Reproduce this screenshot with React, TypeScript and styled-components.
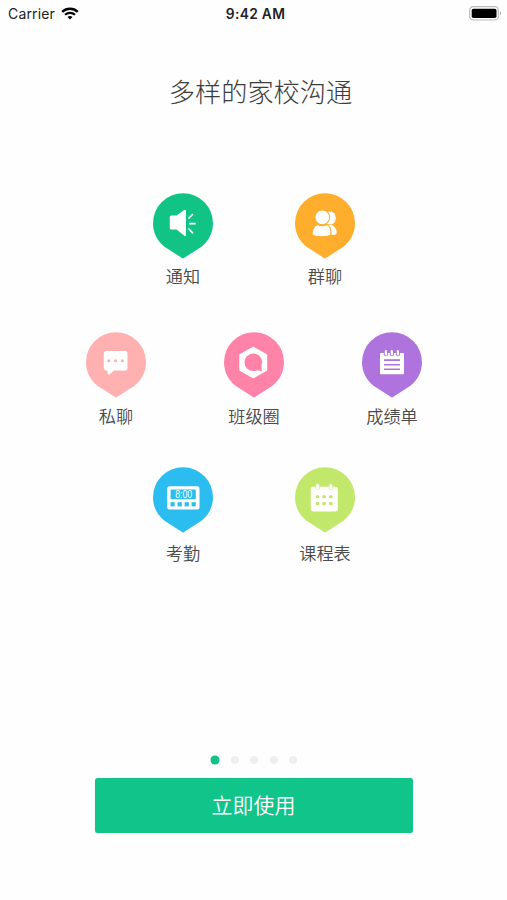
import React from "react";
import styled, { createGlobalStyle } from "styled-components";

const GlobalStyle = createGlobalStyle`
  * { box-sizing: border-box; }
  body {
    margin: 0;
    background: #fff;
    font-family: "Noto Sans CJK SC", sans-serif;
  }
`;

const Screen = styled.main`
  display: flex;
  flex-direction: column;
  width: 507px;
  height: 900px;
  overflow: hidden;
  background: #fefefe;
`;

const StatusBar = styled.header`
  display: grid;
  grid-template-columns: 1fr auto 1fr;
  align-items: center;
  height: 27px;
  padding: 0 5px 0 8px;
  font-family: Inter, sans-serif;
  font-size: 14px;
  color: #222;
`;

const Carrier = styled.div`
  display: flex;
  align-items: center;
  gap: 6px;
  letter-spacing: 0.15px;
`;

const Clock = styled.div`
  padding-left: 1px;
  font-size: 13.8px;
  font-weight: 600;
  letter-spacing: 0.3px;
`;

const BatterySlot = styled.div`
  display: flex;
  justify-content: flex-end;
`;

const Title = styled.h1`
  margin: 45px 0 0;
  padding-left: 14px;
  height: 38px;
  line-height: 38px;
  font-size: 26.2px;
  font-weight: 300;
  text-align: center;
  color: #3c3c3c;
`;

const Features = styled.section`
  display: flex;
  flex-direction: column;
  margin-top: 83px;
`;

const FeatureRow = styled.div<{ $gap: number; $height: number }>`
  display: flex;
  justify-content: center;
  gap: ${(p) => p.$gap}px;
  height: ${(p) => p.$height}px;
  padding-left: 1px;
`;

const FeatureItem = styled.div`
  display: flex;
  flex-direction: column;
  align-items: center;
  width: 60px;
`;

const Pin = styled.svg`
  display: block;
  width: 60px;
  height: 66px;
`;

const Label = styled.span<{ $gap: number }>`
  margin-top: ${(p) => p.$gap}px;
  line-height: 24px;
  font-size: 17.2px;
  font-weight: 350;
  white-space: nowrap;
  color: #4a4a4a;
`;

const Pager = styled.nav`
  display: flex;
  justify-content: center;
  gap: 11.5px;
  height: 8px;
  margin-top: 151px;
  padding-left: 1px;
`;

const Dot = styled.span<{ $active?: boolean }>`
  width: 8px;
  height: 8px;
  border-radius: 50%;
  background: ${(p) => (p.$active ? "#10c487" : "#eeeeee")};
  box-shadow: ${(p) => (p.$active ? "0 0 0 0.5px #10c487" : "none")};
`;

const StartButton = styled.button`
  align-self: center;
  width: 318px;
  height: 55px;
  margin: 14px 0 0 1px;
  padding: 0 1px 2px 0;
  border: 0;
  border-radius: 2.5px;
  background: #11c58a;
  color: #fff;
  font-family: inherit;
  font-size: 21px;
  font-weight: 350;
  line-height: 53px;
`;

const NoticeIcon = (
  <>
    <path
      d="M18.3 22.6H23.5L31.4 17.1Q33 16.4 33 18V42Q33 43.6 31.4 42.8L23.5 36.5H18.3Q16.8 36.5 16.8 35V24.1Q16.8 22.6 18.3 22.6Z"
      fill="#fff"
    />
    <path d="M36 25L39.5 21.5M36.8 30.7H42M36 36L39.5 39.8" stroke="#fff" strokeWidth="1.7" strokeLinecap="round" />
  </>
);

const GroupIcon = (
  <>
    <ellipse cx="35" cy="25" rx="5.8" ry="6.6" fill="#fff" />
    <path d="M31 32H36C39.8 32.5 41.8 37 41.8 40Q41.8 41.7 39.5 41.7H31Z" fill="#fff" />
    <g fill="#fff" stroke="#ffad2c" strokeWidth="1.1">
      <path d="M22.5 31.4Q27.3 34 32 31.4C34.5 33 36 37 36 40.5C36 44.8 17 44.8 17 40.5C17 37 19.2 32.8 22.5 31.4Z" />
      <circle cx="27.3" cy="24.3" r="7.4" />
    </g>
  </>
);

const ChatIcon = (
  <>
    <path
      d="M20.2 19H39.3Q41.5 19 41.5 21.2V36.3Q41.5 38.5 39.3 38.5H28.2L23.5 42.6Q22.3 43.3 21.9 41.8L21 38.5H20.2Q17.8 38.5 17.8 36.3V21.2Q17.8 19 20.2 19Z"
      fill="#fff"
    />
    <g fill="#ffadae">
      <circle cx="22.7" cy="28.8" r="1.5" />
      <circle cx="29.5" cy="28.8" r="1.5" />
      <circle cx="36.3" cy="28.8" r="1.5" />
    </g>
  </>
);

const ClassIcon = (
  <>
    <path
      d="M29.3 15.3L42.5 22.8V38.2L29.3 45.7L16 38.2V22.8Z"
      fill="#fff"
      stroke="#fff"
      strokeWidth="1.4"
      strokeLinejoin="round"
    />
    <circle cx="29.3" cy="30.3" r="8.8" fill="#ff83a8" />
    <path d="M37.5 33L37.8 39.2L32 38Z" fill="#ff83a8" />
  </>
);

const ScoreIcon = (
  <>
    <rect x="18" y="21" width="24" height="21.3" rx="1" fill="#fff" />
    <path d="M22 28.1H38M22 32.7H38M22 37.3H38" stroke="#ae73dc" strokeWidth="1.6" />
    {[23.9, 29.9, 35.9].map((x) => (
      <g key={x}>
        <circle cx={x} cy="22.2" r="2.1" fill="#ae73dc" />
        <path d={`M${x} 19.2V22.5`} stroke="#fff" strokeWidth="2.2" strokeLinecap="round" />
      </g>
    ))}
  </>
);

const AttendanceIcon = (
  <>
    <rect x="14.2" y="19.2" width="32.3" height="23.4" rx="2.5" fill="#fff" />
    <rect x="17.6" y="22.4" width="25.2" height="9.8" rx="0.6" fill="#2bbdf0" />
    {[17.5, 24.6, 31.6, 38.6].map((x) => (
      <rect key={x} x={x} y="35.2" width="4.2" height="4.2" fill="#2bbdf0" />
    ))}
    <text
      x="30.7"
      y="30.9"
      textAnchor="middle"
      fontFamily="Liberation Sans, sans-serif"
      fontSize="10"
      textLength="17"
      lengthAdjust="spacingAndGlyphs"
      fill="#fff"
    >
      8:00
    </text>
  </>
);

const TimetableIcon = (
  <>
    <rect x="15.8" y="19.8" width="27" height="24.6" rx="2.3" fill="#fff" />
    {[22.7, 35.9].map((x) => (
      <g key={x}>
        <path d={`M${x} 18.4V21`} stroke="#c2e86b" strokeWidth="4.2" strokeLinecap="round" />
        <path d={`M${x} 18.2V21.2`} stroke="#fff" strokeWidth="3" strokeLinecap="round" />
      </g>
    ))}
    {[22.4, 29.1, 35.8].map((x) => (
      <g key={x} fill="#c2e86b">
        <rect x={x - 1.7} y="28.3" width="3.4" height="3" rx="0.8" />
        <rect x={x - 1.7} y="35" width="3.4" height="3.3" rx="0.8" />
      </g>
    ))}
  </>
);

interface FeatureProps {
  label: string;
  color: string;
  icon: React.ReactNode;
  labelGap?: number;
}

const Feature = ({ label, color, icon, labelGap = 6 }: FeatureProps) => (
  <FeatureItem>
    <Pin viewBox="0 0 60 66" fill="none">
      <path
        d="M30 .3A30 30 0 0 1 60 30.3C60 40 55.5 48.3 48.5 53.7L31 65Q30 65.8 29 65L11.5 53.7C4.5 48.3 0 40 0 30.3A30 30 0 0 1 30 .3Z"
        fill={color}
      />
      {icon}
    </Pin>
    <Label $gap={labelGap}>{label}</Label>
  </FeatureItem>
);

export default function App() {
  return (
    <>
      <GlobalStyle />
      <Screen>
        <StatusBar>
          <Carrier>
            Carrier
            <svg width="18" height="13" viewBox="0 0 18 13" fill="none">
              <path d="M1.2 4.8C5.5.7 12.5.7 16.8 4.8" stroke="#050505" strokeWidth="2.3" />
              <path d="M4 7.8C6.8 5.2 11.2 5.2 14 7.8" stroke="#050505" strokeWidth="2.1" />
              <path d="M6.5 10.1Q9 8.1 11.5 10.1L9 12.6Z" fill="#050505" />
            </svg>
          </Carrier>
          <Clock>9:42 AM</Clock>
          <BatterySlot>
            <svg width="33" height="15" viewBox="0 0 33 15">
              <rect x=".7" y=".7" width="28.6" height="13.3" rx="3.6" fill="#fff" stroke="#bbb" strokeWidth="1.2" />
              <rect x="2.7" y="2.7" width="24.8" height="9.4" rx="1.8" fill="#000" />
              <path d="M31 5.3Q33 7.3 31 9.4Z" fill="#999" />
            </svg>
          </BatterySlot>
        </StatusBar>
        <Title>多样的家校沟通</Title>
        <Features>
          <FeatureRow $gap={82} $height={139}>
            <Feature label="通知" color="#11c486" icon={NoticeIcon} labelGap={5} />
            <Feature label="群聊" color="#ffad2c" icon={GroupIcon} labelGap={5} />
          </FeatureRow>
          <FeatureRow $gap={78} $height={135}>
            <Feature label="私聊" color="#ffb0b0" icon={ChatIcon} />
            <Feature label="班级圈" color="#ff83a8" icon={ClassIcon} />
            <Feature label="成绩单" color="#ae73dc" icon={ScoreIcon} />
          </FeatureRow>
          <FeatureRow $gap={82} $height={138}>
            <Feature label="考勤" color="#2bbdf0" icon={AttendanceIcon} labelGap={8} />
            <Feature label="课程表" color="#c2e86b" icon={TimetableIcon} labelGap={8} />
          </FeatureRow>
        </Features>
        <Pager>
          <Dot $active />
          <Dot />
          <Dot />
          <Dot />
          <Dot />
        </Pager>
        <StartButton type="button">立即使用</StartButton>
      </Screen>
    </>
  );
}
